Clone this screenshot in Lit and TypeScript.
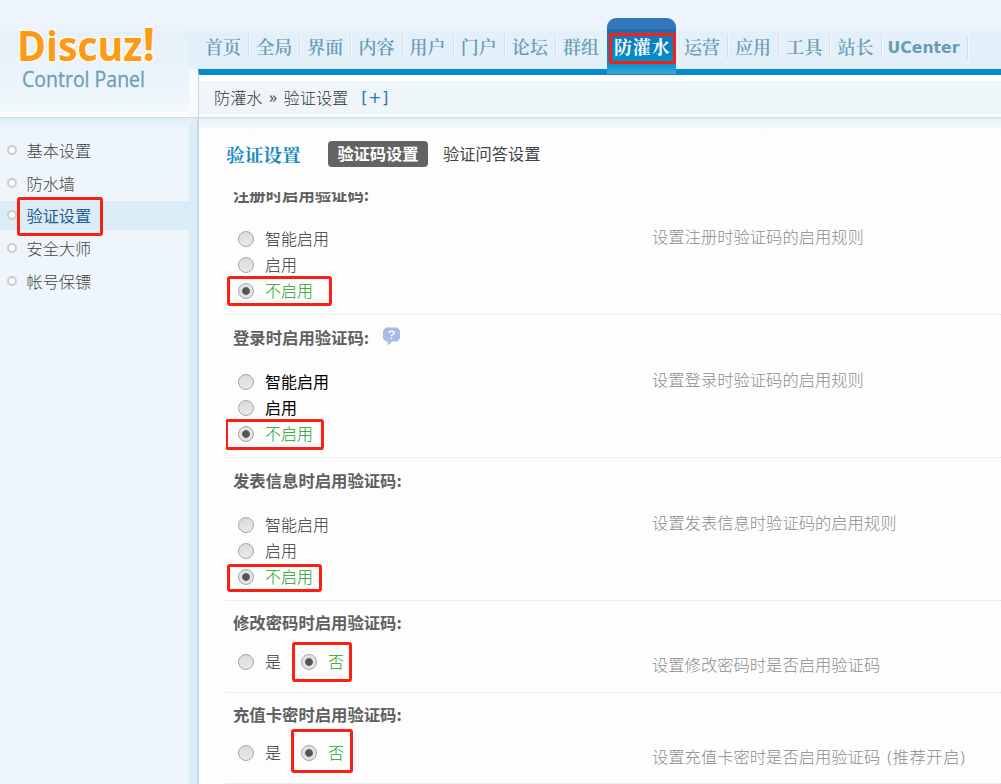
import { LitElement, html, css, svg, nothing } from "lit";
import { customElement, property } from "lit/decorators.js";
import { classMap } from "lit/directives/class-map.js";

type Mark = "" | "wide" | "mid" | "low" | "no-a" | "no-b";

interface Setting {
  title: string;
  desc: string;
  options: string[];
  mark: Mark;
  help?: boolean;
  dark?: boolean;
  inline?: boolean;
}

const NAV = ["首页", "全局", "界面", "内容", "用户", "门户", "论坛", "群组", "防灌水", "运营", "应用", "工具", "站长", "UCenter"];
const MENU = ["基本设置", "防水墙", "验证设置", "安全大师", "帐号保镖"];
const MODES = ["智能启用", "启用", "不启用"];
const YES_NO = ["是", "否"];
const SETTINGS: Setting[] = [
  { title: "注册时启用验证码:", desc: "设置注册时验证码的启用规则", options: MODES, mark: "wide" },
  { title: "登录时启用验证码:", desc: "设置登录时验证码的启用规则", options: MODES, mark: "mid", help: true, dark: true },
  { title: "发表信息时启用验证码:", desc: "设置发表信息时验证码的启用规则", options: MODES, mark: "low" },
  { title: "修改密码时启用验证码:", desc: "设置修改密码时是否启用验证码", options: YES_NO, mark: "no-a", inline: true },
  { title: "充值卡密时启用验证码:", desc: "设置充值卡密时是否启用验证码 (推荐开启)", options: YES_NO, mark: "no-b", inline: true },
];

@customElement("top-nav")
class TopNav extends LitElement {
  static styles = css`
    :host { display: block; height: 69px; }
    .bar { display: flex; box-sizing: border-box; height: 75px; padding: 18px 0 0 7px; }
    .item {
      box-sizing: border-box; width: 51.15px; flex: none; height: 51px; padding-top: 16px;
      display: flex; position: relative; white-space: nowrap;
      font: 600 18px/24px "Noto Serif CJK SC", "Noto Sans CJK SC", sans-serif; color: #6a9cb5;
    }
    .item::after { content: ""; width: 1px; height: 24px; margin-left: auto; margin-right: 7px; background: #d0e1ea; box-shadow: 1px 0 #f2f8fc; }
    .last { width: 86px; padding-top: 18px; font: bold 16px/24px "DejaVu Sans", Verdana, sans-serif; }
    .last span { font-size: 15.7px; margin-left: -1px; }
    .beforeActive { width: 44px; }
    .active {
      width: 69px; height: 56px; margin: 0 8px 0 0; padding-left: 7px; color: #fff; font-weight: 700;
      letter-spacing: .7px; border-radius: 9px 9px 0 0;
      background: linear-gradient(#3477ba 0 11px, #1d70b3 11px, #0e7cc0 25px, #008bcb 37px, #0690cf 46px, #42a7d4 56px);
    }
    .beforeActive::after, .active::after { display: none; }
    .mark { position: absolute; left: 2px; top: 15px; box-sizing: border-box; width: 67px; height: 31px; border: 3px solid #fb1f12; border-radius: 2px; }
  `;
  render() {
    return html`<nav class="bar">
      ${NAV.map((n, i) => html`<a class=${classMap({ item: true, beforeActive: i === 7, active: i === 8, last: i === 13 })}><span>${n}</span>${i === 8 ? html`<i class="mark"></i>` : nothing}</a>`)}
    </nav>`;
  }
}

@customElement("side-menu")
class SideMenu extends LitElement {
  static styles = css`
    :host { display: block; box-sizing: border-box; width: 199px; padding-top: 15px; border-right: 2px solid #c6d9e7;
      background: linear-gradient(#e3f0f8, #e3f0f800 12px), linear-gradient(90deg, #eef6fb 189px, #dbecf9 189px); }
    .item { display: flex; align-items: center; position: relative; width: 189px; height: 32.6px; }
    .item::before { content: ""; box-sizing: border-box; width: 10px; height: 10px; margin: 0 9.5px 0 7px; border: 2px solid #c9cdd0; border-radius: 50%; background: #fff; }
    .label { font: 16.2px/24px "Noto Sans CJK SC", sans-serif; font-weight: 300; color: #444; }
    .current { background: linear-gradient(#0000 2px, #dbecf7 2px 31px, #0000 31px); }
    .current .label { color: #246091; font-weight: 400; }
    .mark { position: absolute; left: 17px; top: -2px; box-sizing: border-box; width: 86px; height: 39px; border: 3px solid #fb1f12; border-radius: 3px; }
  `;
  render() {
    return MENU.map((m, i) => html`<div class=${classMap({ item: true, current: i === 2 })}><span class="label">${m}</span>${i === 2 ? html`<i class="mark"></i>` : nothing}</div>`);
  }
}

@customElement("setting-row")
class SettingRow extends LitElement {
  @property({ attribute: false }) data!: Setting;
  static styles = css`
    :host { display: block; box-sizing: border-box; height: 142.9px; padding-left: 7px; color: #333;
      background: repeating-linear-gradient(90deg, #d9e7f1 0 1px, #f4f8fb 1px 2px) bottom / 100% 1px no-repeat;
      font: 300 16.2px/24px "Noto Sans CJK SC", sans-serif; }
    :host([inline]) { height: 91.5px; }
    .title { display: flex; align-items: center; gap: 13px; height: 24px; padding-top: 9.4px; font-weight: 700; font-size: 16.35px; color: #606060; }
    .body { display: flex; padding-top: 19.2px; }
    .options { width: 419px; flex: none; padding-left: 4px; box-sizing: border-box; }
    .inline { display: flex; margin-top: -5.8px; gap: 19px; }
    .option { display: flex; align-items: center; position: relative; height: 26.1px; }
    .dot { box-sizing: border-box; flex: none; width: 16px; height: 16px; margin: 2px 11px 0 1px; border: 1px solid #a7a7a7; border-radius: 50%; background: linear-gradient(#dadada, #e9e9e9); }
    .on .dot { background: radial-gradient(circle, #555 0 3.4px, #e2e2e2 4.3px); }
    .text { font-size: 16px; }
    .on .text { color: #16a016; }
    .dark .option:not(.on) { color: #000; font-weight: 400; }
    .desc { color: #8c8c8c; font-size: 16.3px; margin-top: -1.2px; word-spacing: 2px; letter-spacing: .02px; white-space: nowrap; }
    .note { font-family: "Noto Sans", "Noto Sans CJK SC", sans-serif; letter-spacing: .7px; }
    .mark { position: absolute; box-sizing: border-box; border: 3px solid #fb1f12; border-radius: 3px; }
    .wide { left: -10px; top: -1px; width: 105px; height: 30px; }
    .mid { left: -12px; top: -1px; width: 99px; height: 31px; }
    .low { left: -10px; top: 1px; width: 95px; height: 28px; }
    .no-a { left: -8px; top: -6px; width: 60px; height: 40px; }
    .no-b { left: -9px; top: -10.5px; width: 62px; height: 44px; }
  `;
  render() {
    const d = this.data;
    const last = d.options.length - 1;
    return html`
      <div class="title"><span>${d.title}</span>${d.help ? html`<svg width="19" height="19" viewBox="0 0 19 19">
        ${svg`<path d="M4 .5h11l3 3v8l-3 3h-5l-4 4-.5-4H4l-3-3v-8z" fill="#abb9e6"></path><path d="M6.8 5.7Q7 4.2 9.5 4.2t2.6 1.8Q12 7 10.8 7.5 9.5 8 9.5 9M9.5 10.3v1.5" fill="none" stroke="#fff" stroke-width="1.5"></path>`}
      </svg>` : nothing}</div>
      <div class="body">
        <div class=${classMap({ options: true, inline: !!d.inline, dark: !!d.dark })}>
          ${d.options.map((o, i) => html`<label class=${classMap({ option: true, on: i === last })}><i class="dot"></i><span class="text">${o}</span>${i === last ? html`<i class="mark ${d.mark}"></i>` : nothing}</label>`)}
        </div>
        <div class="desc">${d.desc.split(" ")[0]}${d.desc.includes(" ") ? html`<span class="note"> ${d.desc.split(" ")[1]}</span>` : nothing}</div>
      </div>`;
  }
}

@customElement("app-root")
class AppRoot extends LitElement {
  static styles = css`
    :host { display: block; width: 1001px; height: 784px; overflow: hidden; background: #fdfdfd; font-family: "Noto Sans CJK SC", sans-serif; }
    .header { display: flex; height: 119px; background: linear-gradient(#edf4fb 0 31px, #e4f0f9 31px 69px, #fff 69px); }
    .brand { width: 198px; flex: none; background: linear-gradient(90deg, #0000 189px, #edf4fb 189px) 0 0 / 100% 31px no-repeat,
      linear-gradient(#e4f0f9, #e4f0f9) 189px 31px / 9px 38px no-repeat,
      linear-gradient(#f7fbfe, #f7fbfe) 189px 69px / 9px 48px no-repeat,
      linear-gradient(#edf4fb 0 31px, #e5f0f9 31px, #eaf4fb 80px, #f3f9fd 112px, #fff 112px 117px, #c8dce7 117px 118px, #e0edf4 118px); }
    .logo { display: block; }
    .name { font: 700 42px "Open Sans", sans-serif; fill: #fc9a17; stroke: #fffaf0; stroke-width: 3px; paint-order: stroke; }
    .bang { font-size: 47px; }
    .sub { font: 400 21px "Open Sans", sans-serif; fill: #6f9db5; stroke: #6f9db5; stroke-width: .3px; }
    .head { flex: 1; min-width: 0; }
    .crumbs { box-sizing: border-box; height: 50px; padding: 11px 0 0 15px; border-top: 6px solid #028bcf; border-left: 1px solid #c3d7e4; display: flex; white-space: pre;
      background: linear-gradient(#fff 0 6px, #eff6fa 6px 39px, #fff 39px 42px, #c8dce7 42px 43px, #e0edf4 43px);
      font: 300 16.2px/22px "Noto Sans CJK SC", sans-serif; color: #333; }
    .more { margin-left: 13px; color: #3674b5; font: 16.5px/24px "DejaVu Sans", sans-serif; letter-spacing: .2px; }
    .raquo { width: 21px; text-align: center; font-family: "Noto Sans", sans-serif; font-weight: 400; color: #555; }
    .body { display: flex; height: 665px; }
    .main { flex: 1; min-width: 0; padding-left: 27px; background: linear-gradient(#e6f2fa, #fdfdfd 12px); }
    .tabs { display: flex; align-items: center; box-sizing: border-box; height: 73px; padding-bottom: 3px; font-size: 16.25px; line-height: 24px; color: #444; }
    .heading { width: 102px; font: 700 18.7px/24px "Noto Serif CJK SC", "Noto Sans CJK SC", sans-serif; color: #168ac4; }
    .tab { font-weight: 400; margin: -2px 0 0 15px; }
    .chosen { margin: 0; width: 100px; height: 26px; border-radius: 4px; background: #636363; color: #fff; font-weight: 700; text-align: center; }
    .list { height: 592px; overflow: hidden; display: flex; flex-direction: column; justify-content: flex-end; }
    .list setting-row { flex: none; }
  `;
  render() {
    return html`
      <header class="header">
        <div class="brand">
          <svg class="logo" width="189" height="110">
            ${svg`<text class="name" x="17" y="61" textLength="138" lengthAdjust="spacingAndGlyphs">Discuz<tspan class="bang">!</tspan></text>
            <text class="sub" x="22" y="87" textLength="123" lengthAdjust="spacingAndGlyphs">Control Panel</text>`}
          </svg>
        </div>
        <div class="head">
          <top-nav></top-nav>
          <div class="crumbs"><span>防灌水</span><span class="raquo">»</span><span>验证设置</span><span class="more">[+]</span></div>
        </div>
      </header>
      <div class="body">
        <side-menu></side-menu>
        <main class="main">
          <div class="tabs"><span class="heading">验证设置</span><span class="tab chosen">验证码设置</span><span class="tab">验证问答设置</span></div>
          <div class="list">${SETTINGS.map((s) => html`<setting-row .data=${s} ?inline=${!!s.inline}></setting-row>`)}</div>
        </main>
      </div>`;
  }
}
